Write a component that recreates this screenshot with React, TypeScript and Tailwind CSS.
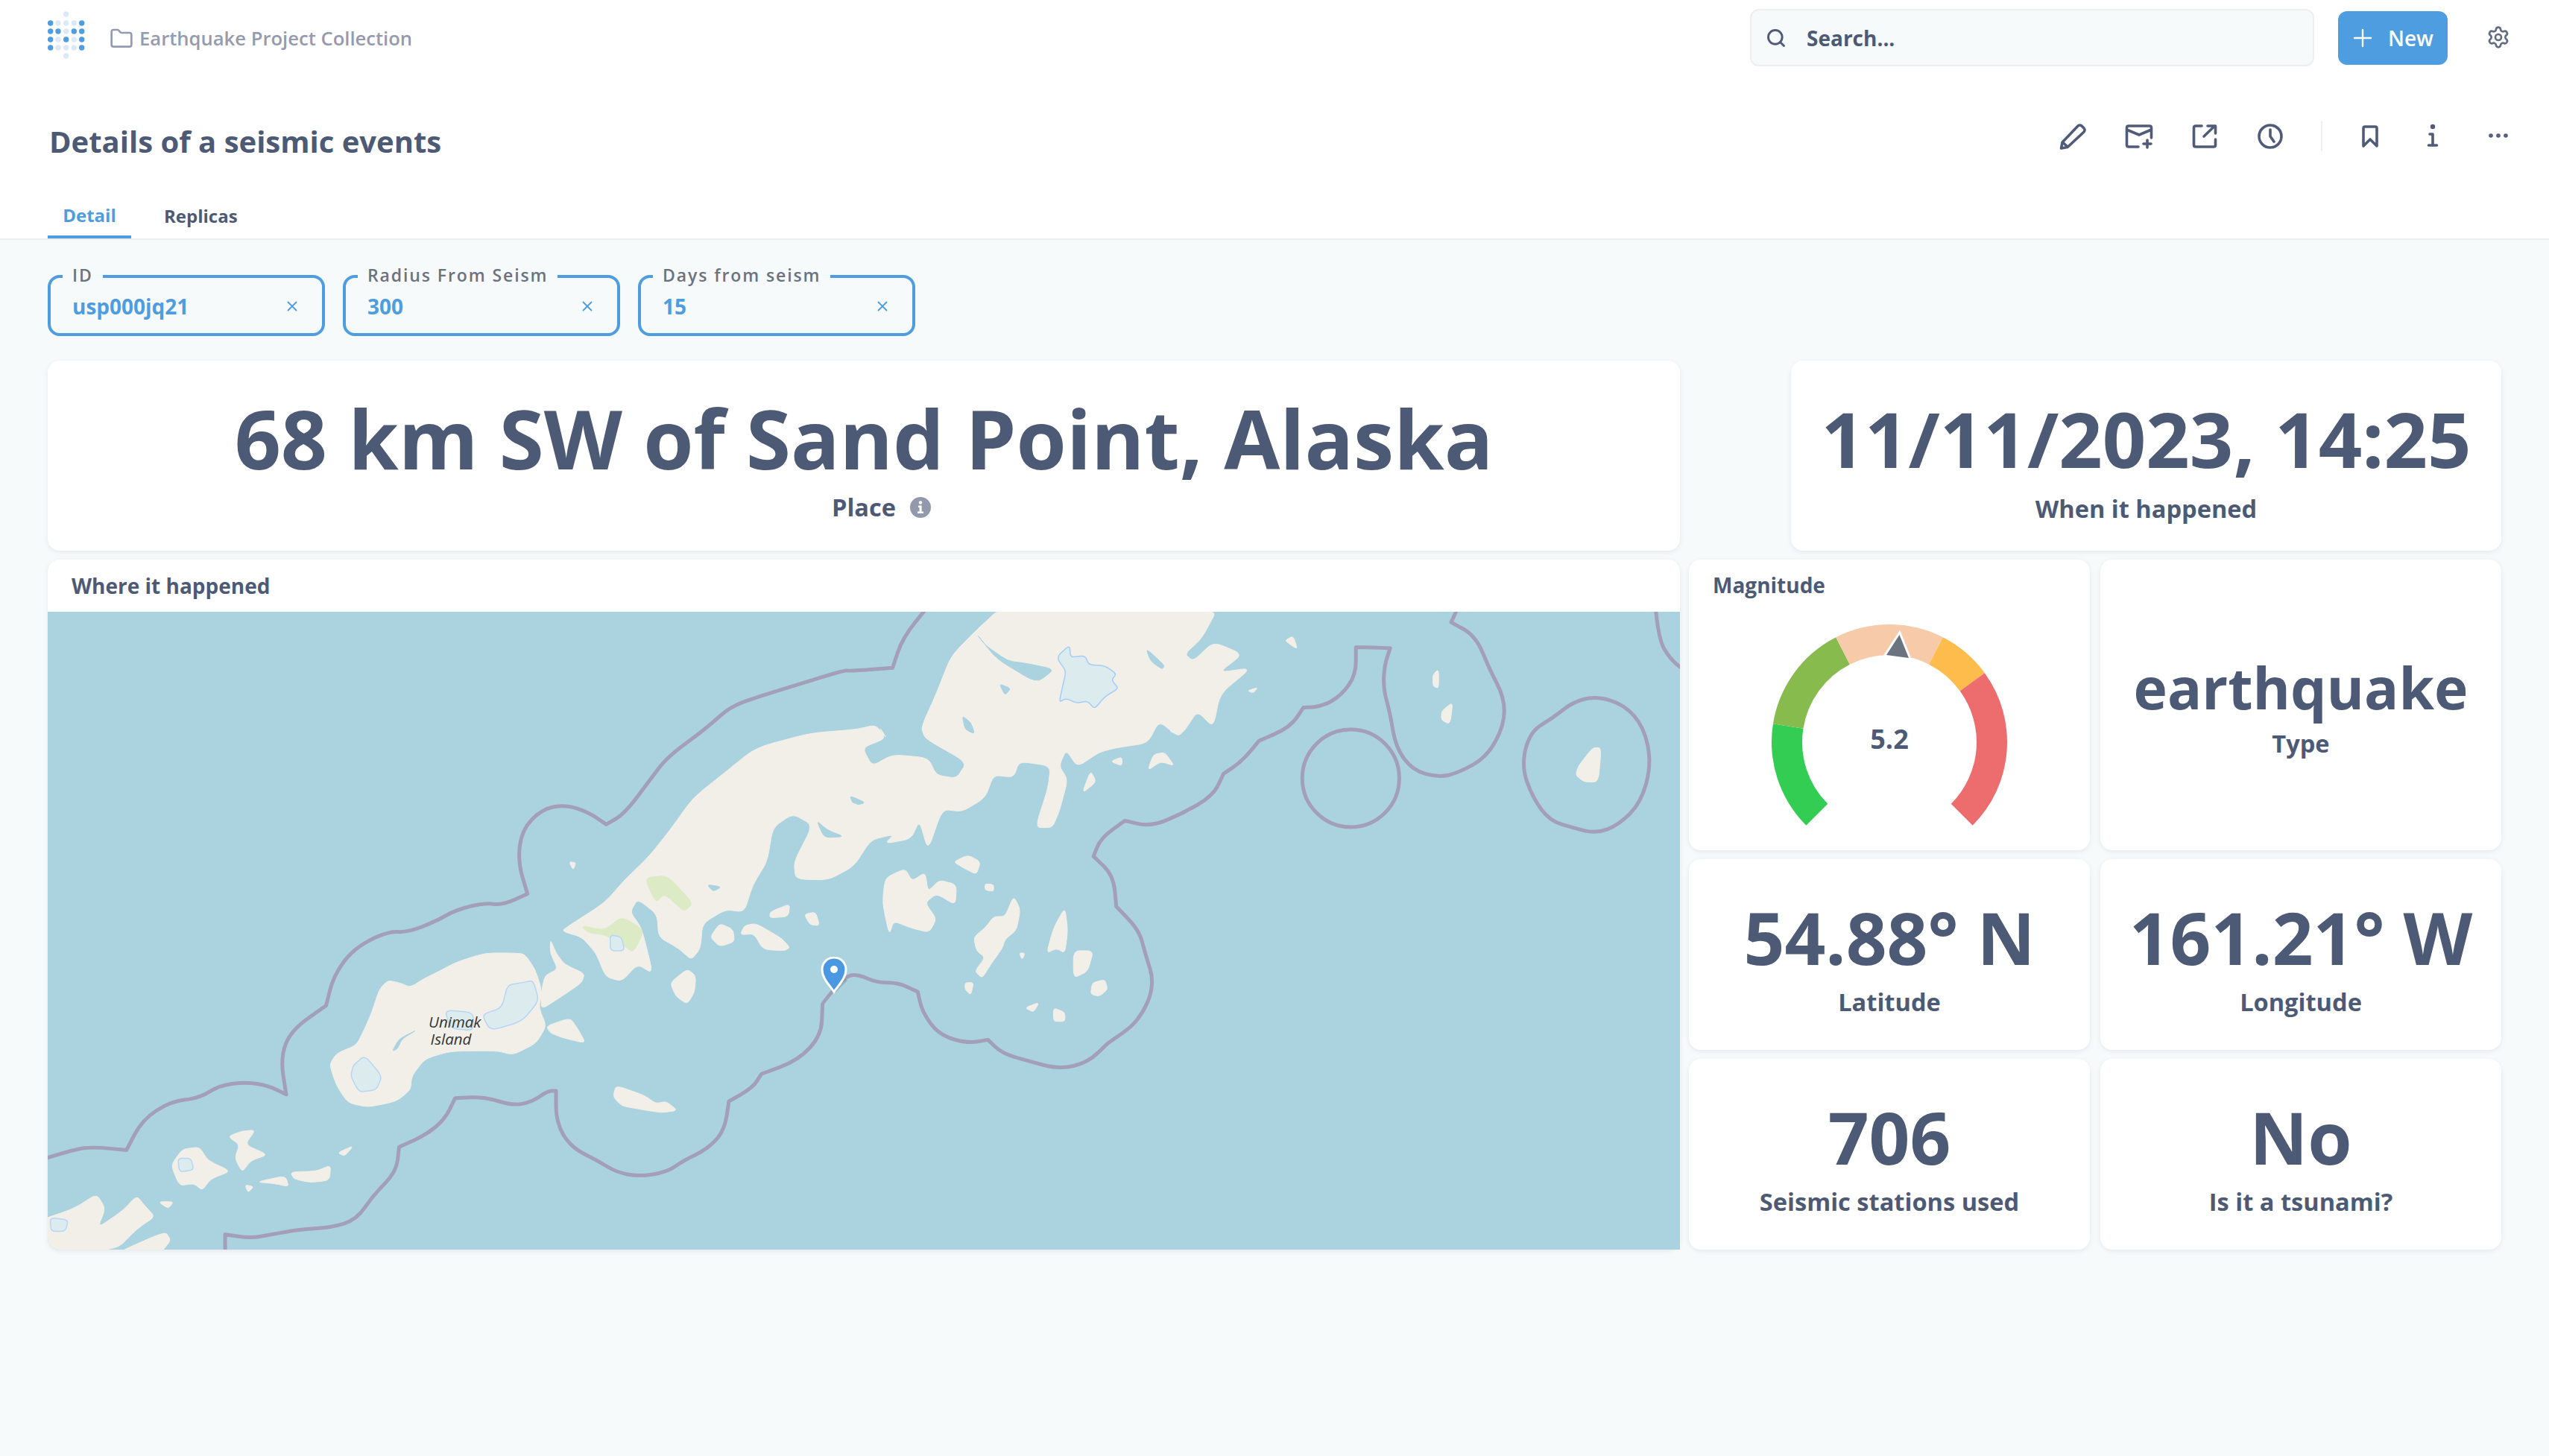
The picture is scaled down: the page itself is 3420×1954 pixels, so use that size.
import { Search, Plus, Settings, Folder, X } from 'lucide-react'

type Pt = [number, number]

// coasts: keeps the traced corner positions, only takes the hard edge off them
function poly(pts: Pt[]) {
  const n = pts.length
  const lerp = (a: Pt, b: Pt, t: number) => `${(a[0] + (b[0] - a[0]) * t).toFixed(1)} ${(a[1] + (b[1] - a[1]) * t).toFixed(1)}`
  let d = `M${lerp(pts[0], pts[1], 0.3)}`
  for (let i = 1; i <= n; i++) {
    const prev = pts[i - 1]
    const p = pts[i % n]
    const next = pts[(i + 1) % n]
    d += ` L${lerp(prev, p, 0.7)} Q${p[0]} ${p[1]} ${lerp(p, next, 0.3)}`
  }
  return d + 'Z'
}

// rounds a traced line through the midpoints of its points
function smooth(pts: Pt[], closed = true) {
  if (!closed) {
    let d = `M${pts[0][0]} ${pts[0][1]}`
    for (let i = 1; i < pts.length - 1; i++) {
      const mx = (pts[i][0] + pts[i + 1][0]) / 2
      const my = (pts[i][1] + pts[i + 1][1]) / 2
      d += ` Q${pts[i][0]} ${pts[i][1]} ${mx} ${my}`
    }
    const last = pts[pts.length - 1]
    return `${d} L${last[0]} ${last[1]}`
  }
  const n = pts.length
  let d = `M${(pts[0][0] + pts[1][0]) / 2} ${(pts[0][1] + pts[1][1]) / 2}`
  for (let i = 1; i <= n; i++) {
    const p = pts[i % n]
    const q = pts[(i + 1) % n]
    d += ` Q${p[0]} ${p[1]} ${(p[0] + q[0]) / 2} ${(p[1] + q[1]) / 2}`
  }
  return d + 'Z'
}

const WATER = '#aad3df'
const LAND = '#f2efe9'
const BORDER = '#a39fb8'

// west half, traced in crop coordinates
const landWest: Pt[][] = [
  [[578,1125],[590,1100],[625,1082],[640,1045],[652,1010],[665,960],[680,940],[700,945],[720,955],[745,935],[770,920],[800,900],[850,880],[900,880],[920,882],[938,915],[950,960],[945,1000],[958,1040],[940,1078],[900,1103],[870,1094],[790,1095],[745,1112],[722,1150],[720,1180],[695,1205],[645,1218],[610,1208],[590,1170]],
  [[965,850],[975,880],[990,905],[1025,925],[1020,945],[985,975],[950,1003],[948,975],[955,930],[978,915],[965,880]],
  [[958,1040],[1000,1022],[1015,1050],[1027,1078],[985,1065],[965,1055]],
  [[1175,945],[1205,915],[1220,930],[1218,965],[1205,992],[1185,975]],
  [[1080,1170],[1130,1192],[1150,1210],[1168,1205],[1188,1225],[1160,1230],[1120,1222],[1090,1215],[1075,1195]],
  [[1350,790],[1385,772],[1382,800],[1350,803]],
  [[1410,795],[1430,790],[1437,820],[1420,818]],
  [[1245,845],[1262,815],[1285,828],[1288,855],[1262,866]],
  [[1298,840],[1305,820],[1325,815],[1360,840],[1372,850],[1385,868],[1375,875],[1338,872],[1322,838]],
  [[300,1345],[320,1310],[350,1305],[365,1335],[405,1358],[370,1375],[355,1400],[340,1385],[315,1390]],
  [[400,1282],[425,1270],[448,1268],[430,1300],[470,1322],[440,1335],[425,1360],[412,1330],[420,1300]],
  [[510,1360],[555,1358],[580,1345],[578,1378],[545,1383],[515,1375]],
  [[450,1382],[500,1368],[507,1392],[480,1385]],
  [[430,1388],[445,1392],[435,1405]],
  [[592,1318],[620,1302],[605,1325]],
  [[60,1470],[130,1440],[170,1408],[185,1440],[172,1482],[215,1445],[240,1412],[255,1435],[272,1458],[240,1485],[205,1530],[60,1540]],
  [[200,1540],[290,1490],[300,1510],[280,1540]],
  [[278,1425],[305,1425],[295,1440]],
  [[998,680],[1010,682],[1005,698]],
]

const lakesWest: Pt[][] = [
  [[620,1125],[640,1105],[670,1150],[660,1180],[630,1185],[615,1150]],
  [[845,1015],[880,1000],[890,950],[915,945],[935,940],[945,985],[915,1030],[860,1050]],
  [[780,1005],[830,1010],[830,1050],[790,1045]],
  [[1070,840],[1090,845],[1095,875],[1070,875]],
  [[312,1330],[335,1330],[340,1355],[315,1360]],
  [[88,1460],[120,1465],[115,1490],[90,1490]],
]

const greenWest: Pt[][] = [
  [[1020,820],[1060,830],[1090,800],[1130,830],[1110,880],[1090,860],[1060,840],[1030,835]],
  [[1130,715],[1170,710],[1215,770],[1200,790],[1165,750],[1150,770]],
]

const waterWest: Pt[][] = [
  [[688,1095],[700,1068],[732,1048],[705,1068],[697,1090]],
  [[1432,590],[1450,610],[1480,625],[1445,627]],
  [[1490,535],[1518,552],[1495,552]],
  [[1240,730],[1265,735],[1250,745]],
]

// east half, same scale, shifted by the crop offset
const landEast: Pt[][] = [
  [[115,715],[150,695],[162,722],[185,703],[190,745],[210,720],[240,730],[238,775],[205,750],[185,770],[205,805],[192,835],[160,825],[130,810],[122,840],[110,770]],
  [[235,680],[260,665],[282,680],[275,708],[250,692]],
  [[290,728],[305,730],[305,745],[290,742]],
  [[270,845],[290,825],[305,800],[325,800],[340,755],[352,785],[345,830],[325,850],[320,870],[300,905],[285,935],[272,920],[290,890],[275,875]],
  [[255,945],[270,945],[265,972],[255,960]],
  [[398,880],[410,825],[430,780],[435,830],[430,880],[415,870]],
  [[445,875],[480,875],[470,920],[445,935]],
  [[478,945],[500,938],[505,960],[490,975],[475,970]],
  [[360,1000],[385,988],[375,1010]],
  [[410,1000],[430,1010],[430,1030],[410,1030]],
  [[350,880],[360,880],[355,895]],
  [[1075,270],[1085,258],[1085,300],[1075,295]],
  [[1090,350],[1110,330],[1105,378],[1090,370]],
  [[1330,470],[1355,430],[1370,430],[1365,505],[1340,505],[1325,490]],
  [[815,195],[830,185],[838,215]],
  [[575,480],[585,445],[605,440],[622,470],[598,460]],
  [[510,460],[530,450],[530,470]],
  [[460,530],[475,480],[485,505]],
  [[612,395],[630,370],[635,400]],
  [[750,305],[768,298],[760,310]],
]

const lakesEast: Pt[][] = [
  [[420,330],[426,295],[432,262],[415,232],[438,205],[440,232],[465,228],[472,248],[500,250],[520,268],[512,282],[524,300],[500,318],[482,345],[470,328],[450,332],[432,322]],
]

const waterEast: Pt[][] = [
  [[250,360],[265,375],[272,400],[255,390]],
  [[315,290],[335,300],[325,315]],
  [[275,180],[310,235],[380,288],[412,258],[362,245],[330,240],[290,205]],
  [[572,212],[605,250],[600,258],[580,240]],
  [[58,538],[80,550],[65,556]],
]

// main peninsula, mixes both halves so it is written in west coordinates
const e = (x: number, y: number): Pt => [x + 1437, y]
const peninsula: Pt[] = [
  [1000,818],[1060,770],[1095,720],[1138,668],[1175,610],[1215,540],[1265,490],[1325,430],[1420,398],[1500,390],[1535,380],[1555,410],
  e(105,385),e(115,410),e(75,430),e(92,470),e(128,445),e(190,452),e(205,490),e(240,497),e(258,462),e(185,410),e(178,385),e(205,310),e(230,230),e(270,178),e(320,120),
  e(700,120),e(670,190),e(640,225),e(655,240),e(690,198),e(742,225),e(700,265),e(757,255),e(702,312),e(690,385),e(662,350),e(640,392),e(628,405),e(595,372),e(575,420),e(520,430),e(490,440),e(452,472),e(432,435),e(420,470),e(435,500),e(420,570),e(408,605),e(378,605),e(400,520),e(405,470),e(350,460),e(340,495),e(305,490),e(290,540),e(250,570),e(215,565),e(190,655),e(175,590),e(160,630),e(115,640),e(130,620),e(90,632),e(60,690),e(15,720),
  [1395,718],[1392,680],[1425,600],[1390,575],[1355,605],[1345,680],[1320,730],[1305,790],[1272,785],[1232,815],[1228,870],[1212,895],[1190,870],[1155,845],[1152,795],[1118,762],[1105,790],[1125,825],[1145,925],[1118,905],[1090,942],[1062,932],[1045,880],[1020,845],[985,832],
]

const borderMain: Pt[] = [
  [60,1338],[130,1310],[165,1305],[222,1312],[222,1312],[250,1245],[300,1205],[350,1198],[385,1170],[430,1163],[470,1170],[502,1190],[502,1190],[492,1110],[510,1050],[572,995],[572,995],[585,930],[620,870],[680,832],[715,835],[765,810],[800,785],[850,770],[882,775],[925,750],[925,750],[908,680],[915,610],[950,565],[990,555],[1030,570],[1063,598],[1063,598],[1095,575],[1140,500],[1170,450],[1238,388],[1280,340],[1330,318],[1390,295],[1480,260],e(50,262),e(128,255),e(128,255),e(145,190),e(190,120),
]
const borderSouth: Pt[] = [
  e(1120,120),e(1107,155),e(1107,155),e(1150,185),e(1175,260),e(1200,320),e(1200,380),e(1170,450),e(1120,485),e(1085,495),e(1040,480),e(1010,430),e(1000,355),e(988,300),e(990,250),e(1000,212),e(1000,212),e(970,210),e(940,210),e(940,210),e(940,270),e(915,315),e(880,340),e(848,342),e(848,342),e(825,385),e(770,415),e(770,415),e(740,460),e(708,487),e(708,487),e(690,535),e(635,575),e(580,603),e(535,590),e(535,590),e(493,628),e(480,668),e(480,668),e(515,710),e(520,778),e(520,778),e(560,830),e(570,878),e(588,950),e(560,1030),e(505,1078),e(505,1078),e(470,1120),e(420,1135),e(362,1115),e(320,1100),e(295,1070),e(295,1070),e(260,1078),e(210,1060),e(180,1010),e(172,965),e(172,965),e(138,945),e(100,945),e(68,927),e(45,930),e(5,990),
  [1442,995],[1442,995],[1440,1060],[1400,1115],[1335,1145],[1335,1145],[1320,1175],[1278,1205],[1278,1205],[1270,1270],[1240,1310],[1198,1335],[1170,1360],[1120,1370],[1080,1360],[1048,1335],[1000,1305],[975,1250],[975,1182],[975,1182],[960,1182],[935,1205],[900,1215],[850,1195],[798,1198],[798,1198],[780,1245],[745,1280],[700,1305],[700,1305],[695,1360],[655,1410],[625,1465],[580,1482],[530,1485],[470,1498],[440,1505],[395,1497],[395,1497],[395,1540],
]
const ringEast: Pt[] = [
  [1285,365],[1320,330],[1360,317],[1410,335],[1445,385],[1458,465],[1440,550],[1400,600],[1360,618],[1320,605],[1280,590],[1250,540],[1230,470],[1245,395],
]
const cornerEast: Pt[] = [[1465,120],[1470,190],[1490,235],[1520,265]]

function Shapes({ list, fill, stroke }: { list: Pt[][]; fill: string; stroke?: string }) {
  return (
    <>
      {list.map((pts, i) => (
        <path key={i} d={poly(pts)} fill={fill} stroke={stroke ?? fill} strokeWidth={stroke ? 1.5 : 1} strokeLinejoin="round" vectorEffect="non-scaling-stroke" />
      ))}
    </>
  )
}

function SeismicMap() {
  return (
    <div className="relative h-[856px] overflow-hidden rounded-bl-2xl bg-[#aad3df]">
      <svg className="block h-[856px] w-[2190px]" viewBox="84 132 2861 1398" preserveAspectRatio="none">
        <path d={poly(peninsula)} fill={LAND} stroke={LAND} strokeWidth={1} strokeLinejoin="round" vectorEffect="non-scaling-stroke" />
        <Shapes list={landWest} fill={LAND} />
        <Shapes list={waterWest} fill={WATER} />
        <Shapes list={greenWest} fill="#dcebc6" />
        <Shapes list={lakesWest} fill="#dcebee" stroke="#b5d6f5" />
        <g transform="translate(1437 0)">
          <Shapes list={landEast} fill={LAND} />
          <Shapes list={waterEast} fill={WATER} />
          <Shapes list={lakesEast} fill="#dcebee" stroke="#a3cdf8" />
        </g>
        <g fill="none" stroke={BORDER} strokeWidth="5" strokeLinejoin="round">
          <path d={smooth(borderMain, false)} vectorEffect="non-scaling-stroke" />
          <path d={smooth(borderSouth, false)} vectorEffect="non-scaling-stroke" />
          <g transform="translate(1437 0)">
            <ellipse cx="931" cy="497" rx="85" ry="107" vectorEffect="non-scaling-stroke" />
            <path d={smooth(ringEast)} vectorEffect="non-scaling-stroke" />
            <path d={smooth(cornerEast, false)} vectorEffect="non-scaling-stroke" />
          </g>
        </g>
      </svg>
      <div className="absolute left-[511px] top-[539px] w-[60px] text-center text-[20.5px] font-normal italic leading-[23px] text-[#333]">
        Unimak Island
      </div>
      <svg className="absolute left-[1037px] top-[463px] h-[50px] w-[38px]" viewBox="0 0 38 50">
        <path d="M24 22 L36 32 L20 48Z" fill="#6b7b85" opacity=".35" />
        <path d="M18 47 C12 38 2 29 2 17 C2 8 9 1 18 1 C27 1 34 8 34 17 C34 29 24 38 18 47Z" fill="#4a98e2" stroke="#fff" strokeWidth="3" />
        <circle cx="18" cy="17" r="5" fill="#fff" />
      </svg>
    </div>
  )
}

function polar(r: number, deg: number): string {
  const a = (deg * Math.PI) / 180
  return `${(180 + r * Math.sin(a)).toFixed(2)} ${(180 - r * Math.cos(a)).toFixed(2)}`
}

function arc(from: number, to: number) {
  const large = to - from > 180 ? 1 : 0
  return `M${polar(158, from)} A158 158 0 ${large} 1 ${polar(158, to)} L${polar(117, to)} A117 117 0 ${large} 0 ${polar(117, from)}Z`
}

function Gauge() {
  const segments = [
    { from: -135, to: -81, color: '#32cd52' },
    { from: -81, to: -27, color: '#88bb4e' },
    { from: -27, to: 27, color: '#f7cba9' },
    { from: 27, to: 54, color: '#fdbc4b' },
    { from: 54, to: 135, color: '#ed6d6f' },
  ]
  return (
    <div className="relative mx-auto mt-[11px] h-[300px] w-[360px]">
      <svg className="block h-[300px] w-[360px]" viewBox="0 0 360 300">
        {segments.map((s) => (
          <path key={s.from} d={arc(s.from, s.to)} fill={s.color} />
        ))}
        <path d="M193.5 36 L176 63 L206 67Z" fill="#6b7280" stroke="#fff" strokeWidth="6" strokeLinejoin="miter" paintOrder="stroke" />
      </svg>
      <div className="absolute inset-x-0 top-[152px] text-center text-[36px] font-bold leading-[48px] text-[#4d5a75]">5.2</div>
    </div>
  )
}

function FilterField({ label, value, width }: { label: string; value: string; width: string }) {
  return (
    <div className={`relative h-[82px] ${width} rounded-2xl border-4 border-[#4e9de0] px-[29px]`}>
      <span className="absolute left-[16px] top-[-20px] bg-[#f7fafb] px-[13px] text-[23px] font-semibold leading-[32px] tracking-[1.9px] text-[#6b7280]">
        {label}
      </span>
      <div className="flex h-full items-center justify-between pt-[2px]">
        <span className="text-[28px] font-bold leading-[40px] text-[#4e9de0]">{value}</span>
        <X className="text-[#4e9de0]" size={22} strokeWidth={2} />
      </div>
    </div>
  )
}

function StatCard({ value, label, className, size }: { value: string; label: string; className?: string; size: string }) {
  return (
    <div className={`flex flex-col items-center justify-center rounded-2xl bg-white pb-[4px] shadow-[0_2px_6px_rgba(60,80,100,0.1)] ${className ?? ''}`}>
      <div className={`font-bold text-[#4d5a75] ${size}`}>{value}</div>
      <div className="mt-[-4px] text-[32.6px] font-bold leading-[46px] text-[#4d5a75]">{label}</div>
    </div>
  )
}

function Logo() {
  const rows = [
    [0, 0, 1, 0, 0],
    [2, 1, 1, 1, 2],
    [2, 2, 1, 2, 2],
    [2, 1, 2, 1, 2],
    [2, 1, 1, 1, 2],
    [0, 0, 1, 0, 0],
  ]
  const ys = [9, 21, 32, 43, 54, 65]
  const xs = [3.7, 14, 24.7, 35.3, 45.7]
  return (
    <svg className="h-[74px] w-[50px] shrink-0" viewBox="0 0 50 74">
      {rows.map((row, r) =>
        row.map((v, c) =>
          v ? <circle key={`${r}-${c}`} cx={xs[c]} cy={ys[r]} r="3.7" fill={v === 2 ? '#4e9de0' : '#dce9f9'} /> : null,
        ),
      )}
    </svg>
  )
}

function ActionIcon({ children, className }: { children: React.ReactNode; className?: string }) {
  return (
    <svg className={`h-10 w-10 ${className ?? ''}`} viewBox="0 0 40 40" fill="none" stroke="#4f5b78" strokeWidth="3.6" strokeLinecap="round" strokeLinejoin="round">
      {children}
    </svg>
  )
}

export default function App() {
  return (
    <div className="min-h-[1954px] w-[3420px] bg-[#f7fafb] font-['Open_Sans',sans-serif]">
      <header className="h-[322px] border-b-2 border-[#eeeeee] bg-white">
        <div className="flex h-[104px] items-start pl-[64px] pr-[52px]">
          <div className="mt-[10px]"><Logo /></div>
          <div className="ml-[33px] mt-[34px] flex items-center gap-[8px] text-[#949bb0]">
            <Folder size={32} strokeWidth={2} />
            <span className="text-[25.6px] font-semibold leading-[36px]">Earthquake Project Collection</span>
          </div>
          <div className="ml-auto mt-[12px] flex h-[77px] w-[757px] items-center rounded-xl border-2 border-[#eeeeee] bg-[#f7fafb] pl-[19px]">
            <Search size={28} strokeWidth={2.5} className="text-[#4f5b78]" />
            <span className="ml-[27px] text-[28px] font-bold text-[#4d5a75]">Search...</span>
          </div>
          <div className="ml-[32px] mt-[15px] flex h-[72px] w-[147px] items-center gap-[15px] rounded-xl bg-[#4e9de0] pl-[14px] text-white">
            <Plus size={38} strokeWidth={1.5} />
            <span className="text-[28px] font-semibold">New</span>
          </div>
          <div className="ml-[52px] mt-[34px] text-[#626b80]">
            <Settings size={32} strokeWidth={2} />
          </div>
        </div>
        <div className="flex h-[158px] items-center pl-[66px] pr-[48px]">
          <h1 className="pt-[14px] text-[40px] font-bold leading-[56px] text-[#4d5a75]">Details of a seismic events</h1>
          <div className="ml-auto flex items-center">
            <ActionIcon>
              <path d="M4.5 36 L6 28 L27 6 Q29.5 4 32 6 L35 9 Q37 11.5 35 14 L13 34.5 Z M6.5 28 L13 34" />
            </ActionIcon>
            <ActionIcon className="ml-[49px]">
              <path d="M19 34 H6 Q3.5 34 3.5 31.5 V8.5 Q3.5 6 6 6 H34 Q36.5 6 36.5 8.5 V22 M3.5 11 L20 18 L36.5 11 M31 25 V35 M26 30 H36" />
            </ActionIcon>
            <ActionIcon className="ml-[48px]">
              <path d="M16 6 H8 Q5.5 6 5.5 8.5 V31.5 Q5.5 34 8 34 H32 Q34.5 34 34.5 31.5 V24 M19 20 L33 6.5 M24 6 H34.5 V16" />
            </ActionIcon>
            <ActionIcon className="ml-[48px]">
              <circle cx="20" cy="20" r="15" />
              <path d="M20 11 V20 L25 27" />
            </ActionIcon>
            <div className="ml-[48px] h-[40px] w-[2px] bg-[#eeeeee]" />
            <ActionIcon className="ml-[44px]">
              <path d="M11 33 V9 Q11 7 13 7 H27 Q29 7 29 9 V33 L20 24 Z" />
            </ActionIcon>
            <ActionIcon className="ml-[44px]">
              <path d="M16 17 H20 V32 M14.5 32 H25.5" />
              <circle cx="20" cy="7" r="1.4" fill="#4f5b78" />
            </ActionIcon>
            <ActionIcon className="ml-[48px]">
              <circle cx="10" cy="19" r="1" fill="#4f5b78" />
              <circle cx="20" cy="19" r="1" fill="#4f5b78" />
              <circle cx="30" cy="19" r="1" fill="#4f5b78" />
            </ActionIcon>
          </div>
        </div>
        <nav className="flex h-[58px] pl-[64px]">
          <div className="flex h-[58px] w-[112px] items-center justify-center border-b-4 border-[#4e9de0] text-[24px] font-bold text-[#4e9de0]">Detail</div>
          <div className="ml-[44px] flex h-[58px] items-center pb-[2px] text-[24px] font-bold text-[#4d5a75]">Replicas</div>
        </nav>
      </header>

      <section className="flex gap-[24px] pl-[64px] pt-[47px]">
        <FilterField label="ID" value="usp000jq21" width="w-[372px]" />
        <FilterField label="Radius From Seism" value="300" width="w-[372px]" />
        <FilterField label="Days from seism" value="15" width="w-[372px]" />
      </section>

      <section className="mt-[33px] flex w-[3356px] justify-between pl-[64px]">
        <div className="flex h-[255px] w-[2190px] flex-col items-center justify-center rounded-2xl bg-white pb-[8px] shadow-[0_2px_6px_rgba(60,80,100,0.1)]">
          <div className="text-[108.8px] font-bold leading-[150px] text-[#4d5a75]">68 km SW of Sand Point, Alaska</div>
          <div className="relative mt-[-4px] text-[32.6px] font-bold leading-[44px] text-[#4d5a75]">
            Place
            <svg className="absolute left-full top-[8px] ml-[19px] h-7 w-7" viewBox="0 0 28 28">
              <circle cx="14" cy="14" r="14" fill="#9299ac" />
              <circle cx="14" cy="7.5" r="2.2" fill="#fff" />
              <path d="M11 11.5 H15.6 V19.5 H18 V22 H10 V19.5 H12.6 V14 H11Z" fill="#fff" />
            </svg>
          </div>
        </div>
        <StatCard className="h-[255px] w-[953px]" size="text-[102.4px] leading-[150px]" value="11/11/2023, 14:25" label="When it happened" />
      </section>

      <section className="mt-[12px] flex w-[3356px] gap-[12px] pl-[64px]">
        <div className="w-[2190px] rounded-2xl bg-white shadow-[0_2px_6px_rgba(60,80,100,0.1)]">
          <div className="flex h-[70px] items-center pl-[32px] text-[28px] font-bold text-[#4d5a75]">Where it happened</div>
          <SeismicMap />
        </div>
        <div className="grid w-[1090px] grid-cols-[538px_538px] grid-rows-[390px_256px_256px] gap-x-[14px] gap-y-[12px]">
          <div className="rounded-2xl bg-white shadow-[0_2px_6px_rgba(60,80,100,0.1)]">
            <div className="pl-[32px] pt-[14px] text-[28px] font-bold leading-[40px] text-[#4d5a75]">Magnitude</div>
            <Gauge />
          </div>
          <StatCard size="text-[76.8px] leading-[112px]" value="earthquake" label="Type" />
          <StatCard size="text-[96px] leading-[136px]" value="54.88° N" label="Latitude" />
          <StatCard size="text-[96px] leading-[136px]" value="161.21° W" label="Longitude" />
          <StatCard size="text-[96px] leading-[136px]" value="706" label="Seismic stations used" />
          <StatCard size="text-[96px] leading-[136px]" value="No" label="Is it a tsunami?" />
        </div>
      </section>
    </div>
  )
}
